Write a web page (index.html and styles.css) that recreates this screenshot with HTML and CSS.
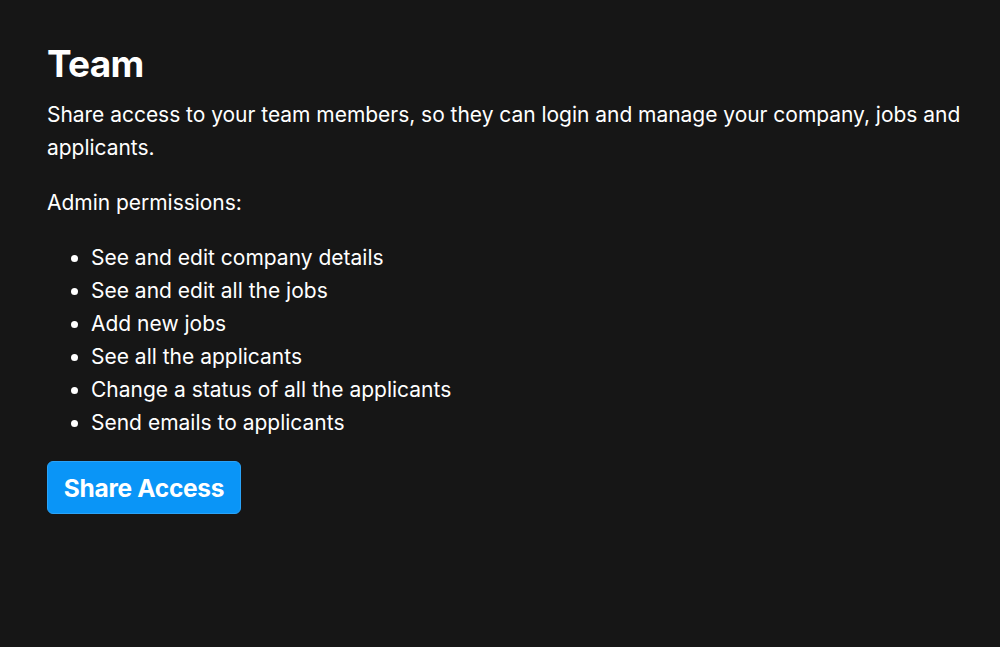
FILE: index.html
```html
<!DOCTYPE html>
<html>
<head>
<meta charset="utf-8">
<link rel="stylesheet" href="styles.css">
</head>
<body>
<main class="page">
  <h1 class="title">Team</h1>
  <p class="text">Share access to your team members, so they can login and manage your company, jobs and applicants.</p>
  <p class="text">Admin permissions:</p>
  <ul class="perms">
    <li>See and edit company details</li>
    <li>See and edit all the jobs</li>
    <li>Add new jobs</li>
    <li>See all the applicants</li>
    <li>Change a status of all the applicants</li>
    <li>Send emails to applicants</li>
  </ul>
  <button class="btn">Share Access</button>
</main>
</body>
</html>
```
FILE: styles.css
```css
html, body {
  margin: 0;
  padding: 0;
  background: #161616;
  height: 100%;
}
body {
  font-family: Inter, "Noto Sans", sans-serif;
  color: #ffffff;
}
.page {
  padding: 40px 30px 0 47px;
}
.title {
  margin: 0;
  font-size: 37px;
  font-weight: 700;
  line-height: 48px;
  letter-spacing: -0.7px;
}
.text {
  margin: 10px 0 0 0;
  font-size: 21px;
  line-height: 33px;
  letter-spacing: -0.03px;
}
.text + .text {
  margin-top: 22px;
}
.perms {
  margin: 22px 0 0 0;
  padding-left: 44px;
  font-size: 21px;
  line-height: 33px;
}
.btn {
  margin-top: 22px;
  display: block;
  background: #0a95f7;
  color: #fff;
  border: 1px solid #2aa3f8;
  border-radius: 6px;
  font-family: Inter, "Noto Sans", sans-serif;
  font-size: 24.5px;
  font-weight: 700;
  padding: 0 10px;
  height: 53px;
  width: 194px;
  letter-spacing: -0.3px;
}
```
